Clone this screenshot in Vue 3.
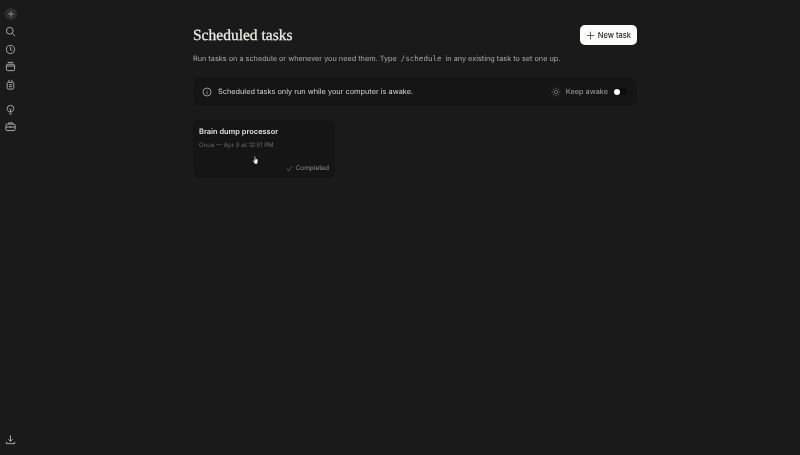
<template>
  <div class="app">
    <aside class="sidebar">
      <div class="nav-group">
        <button class="nav-btn new-btn">
          <svg viewBox="0 0 12 12" width="8" height="8"><path d="M6 1.500v9M1.500 6h9" /></svg>
        </button>
        <button class="nav-btn">
          <svg viewBox="0 0 12 12" width="11" height="11"><circle cx="5.200" cy="5.200" r="3.700" /><path d="M8 8l3 3" /></svg>
        </button>
        <button class="nav-btn">
          <svg viewBox="0 0 12 12" width="11" height="11"><circle cx="6" cy="6" r="4.400" /><path d="M6 3.200V6l2 1.200" /></svg>
        </button>
        <button class="nav-btn">
          <svg viewBox="0 0 12 12" width="11" height="11"><rect x="1.500" y="3.500" width="9" height="7" rx="1.600" /><path d="M3 1.500h6M1.500 5.500h9" /></svg>
        </button>
        <button class="nav-btn">
          <svg viewBox="0 0 12 12" width="11" height="11"><rect x="2.400" y="3.600" width="7.200" height="7.400" rx="1.400" /><path d="M4.400 3.600V1M7.600 3.600V1M4.300 6.200h3.400M4.300 8.400h3.400" /></svg>
        </button>
      </div>
      <div class="nav-group second">
        <button class="nav-btn">
          <svg viewBox="0 0 12 12" width="11" height="11"><path d="M4.300 8.600C3.400 7.800 2.400 6.800 2.400 5.100a3.600 3.600 0 0 1 7.200 0c0 1.700-1 2.700-1.900 3.500zM4.600 10.800h2.800M4.800 5.200L6 6.400l1.200-1.200M6 6.400v2.200" /></svg>
        </button>
        <button class="nav-btn">
          <svg viewBox="0 0 12 12" width="11" height="11"><rect x="1" y="3.400" width="10" height="7" rx="1.200" /><path d="M4 3.400V2h4v1.400M1 6.600h10M6 5.800v1.600" /></svg>
        </button>
      </div>
      <button class="nav-btn bottom">
        <svg viewBox="0 0 12 12" width="11" height="11"><path d="M6 1.500v6.400M3.600 5.600L6 8l2.400-2.400M1.500 8.500v2h9v-2" /></svg>
      </button>
    </aside>

    <main class="content">
      <header class="head">
        <h1>Scheduled tasks</h1>
        <button class="new-task">
          <svg viewBox="0 0 12 12" width="9" height="9"><path d="M6 1v10M1 6h10" /></svg>
          New task
        </button>
      </header>

      <p class="intro">
        Run tasks on a schedule or whenever you need them. Type
        <code>/schedule</code>
        in any existing task to set one up.
      </p>

      <div class="notice">
        <svg class="info" viewBox="0 0 12 12" width="10" height="10"><circle cx="6" cy="6" r="4.800" /><path d="M6 5.500v3M6 3.400v.8" /></svg>
        <span class="notice-text">Scheduled tasks only run while your computer is awake.</span>
        <svg class="sun" viewBox="0 0 12 12" width="10" height="10"><circle cx="6" cy="6" r="2.100" /><path d="M6 .8v1.600M6 9.600v1.600M.8 6h1.600M9.600 6h1.600M2.300 2.300l1.100 1.100M8.600 8.600l1.100 1.100M2.300 9.700l1.100-1.100M8.600 3.400l1.100-1.100" /></svg>
        <span class="keep">Keep awake</span>
        <span class="toggle"><span class="knob"></span></span>
      </div>

      <div class="tasks">
        <div v-for="task in tasks" :key="task.name" class="task-card">
          <div class="task-name">{{ task.name }}</div>
          <div class="task-when">{{ task.when }}</div>
          <div class="task-status">
            <svg viewBox="0 0 12 12" width="7" height="7"><path d="M1.500 6.500L4.500 10l6-8" /></svg>
            {{ task.status }}
          </div>
          <svg class="cursor" viewBox="0 0 12 14" width="8" height="11">
            <path d="M3.600 1.200c0-.9 1.400-.9 1.400 0v4.200l.3-.9c.5-.2 1 0 1.100.4.400-.3 1-.1 1.100.4.500-.3 1.200 0 1.200.6.100 1.300.2 2.800-.4 4.200-.3.800-.6 1.200-.6 2.100H4.200c-.2-1-.8-1.500-1.400-2.400L1.300 7.700c-.4-.7.400-1.300 1-.8l1.300 1.300z" />
          </svg>
        </div>
      </div>
    </main>
  </div>
</template>

<script setup>
const tasks = [
  { name: 'Brain dump processor', when: 'Once — Apr 9 at 12:51 PM', status: 'Completed' }
]
</script>

<style>
html, body {
  margin: 0;
  background: #1a1a1a;
}
</style>

<style scoped>
.app {
  display: flex;
  width: 800px;
  height: 455px;
  overflow: hidden;
  background: #1a1a1a;
  color: #e8e6e1;
  font-family: Inter, "Liberation Sans", sans-serif;
  text-rendering: geometricPrecision;
}

/* Sidebar */
.sidebar {
  display: flex;
  flex-direction: column;
  align-items: center;
  width: 21px;
  flex-shrink: 0;
  padding: 6px 0 8px;
  box-sizing: border-box;
}

.nav-group {
  display: flex;
  flex-direction: column;
  gap: 1.500px;
}

.second {
  margin-top: 9px;
}

.nav-btn {
  display: flex;
  align-items: center;
  justify-content: center;
  width: 16px;
  height: 16px;
  padding: 0;
  border: none;
  border-radius: 50%;
  background: transparent;
}

.nav-btn svg {
  fill: none;
  stroke: #b5b3ae;
  stroke-width: 1;
}

.new-btn {
  padding: 2px;
  background: #2e2e2e content-box;
}

.bottom {
  margin-top: auto;
}

/* Main column */
.content {
  width: 444px;
  margin-left: 172px;
  padding-top: 25px;
  /* own layer, keeps the small text grey instead of colour fringed */
  will-change: opacity;
}

.head {
  display: flex;
  justify-content: space-between;
  align-items: center;
  height: 20px;
}

h1 {
  margin: 1px 0 0;
  font-family: "Liberation Serif", serif;
  font-size: 15.500px;
  font-weight: 400;
  color: #f0eee9;
  -webkit-text-stroke: .25px #f0eee9;
}

.new-task {
  display: flex;
  align-items: center;
  gap: 3px;
  height: 20px;
  padding: 0 6px;
  border: none;
  border-radius: 5px;
  background: #fbfbf9;
  color: #2a2a2a;
  font-family: inherit;
  font-size: 7.500px;
  font-weight: 500;
}

.new-task svg {
  fill: none;
  stroke: #333;
  stroke-width: 1;
}

.intro {
  margin: 8px 0 0;
  font-size: 7.300px;
  line-height: 12px;
  color: #adaba6;
  white-space: nowrap;
}

code {
  padding: 0 2px;
  font-family: "DejaVu Sans Mono", monospace;
  font-size: 7.500px;
  color: #a8a6a1;
}

.notice {
  display: flex;
  align-items: center;
  height: 29px;
  margin-top: 12px;
  padding: 0 10px 0 9px;
  border-radius: 6px;
  background: #151515;
  font-size: 7.350px;
}

.info {
  fill: none;
  stroke: #b5b3ae;
  stroke-width: 1;
  margin-right: 6px;
}

.notice-text {
  color: #d6d4cf;
}

.sun {
  margin-left: auto;
  margin-right: 5px;
  fill: none;
  stroke: #9a9893;
  stroke-width: .8;
}

.keep {
  color: #a3a19c;
}

.toggle {
  display: flex;
  align-items: center;
  width: 13px;
  height: 7px;
  margin-left: 6px;
  border-radius: 4px;
  background: #0d0d0d;
}

.knob {
  width: 6px;
  height: 6px;
  border-radius: 50%;
  background: #fff;
}

/* Task cards */
.tasks {
  display: grid;
  grid-template-columns: repeat(3, 142px);
  gap: 9px;
  margin-top: 14px;
}

.task-card {
  position: relative;
  display: flex;
  flex-direction: column;
  height: 58px;
  padding: 6px 6px 5px;
  box-sizing: border-box;
  border-radius: 5px;
  background: #151515;
}

.task-name,
.task-when,
.task-status {
  will-change: opacity;
}

.task-name {
  font-size: 7.450px;
  font-weight: 600;
  line-height: 12px;
  color: #e3e1dc;
}

.task-when {
  margin-top: 2px;
  font-size: 6.100px;
  line-height: 12px;
  color: #6e6c68;
}

.task-status {
  display: flex;
  align-items: center;
  justify-content: flex-end;
  gap: 2px;
  margin-top: auto;
  font-size: 6.500px;
  line-height: 10px;
  color: #8f8d88;
}

.task-status svg {
  fill: none;
  stroke: #8f8d88;
  stroke-width: 1;
}

.cursor {
  position: absolute;
  left: 59px;
  top: 35px;
  fill: #f2f2f2;
  stroke: #222;
  stroke-width: .5;
}
</style>
